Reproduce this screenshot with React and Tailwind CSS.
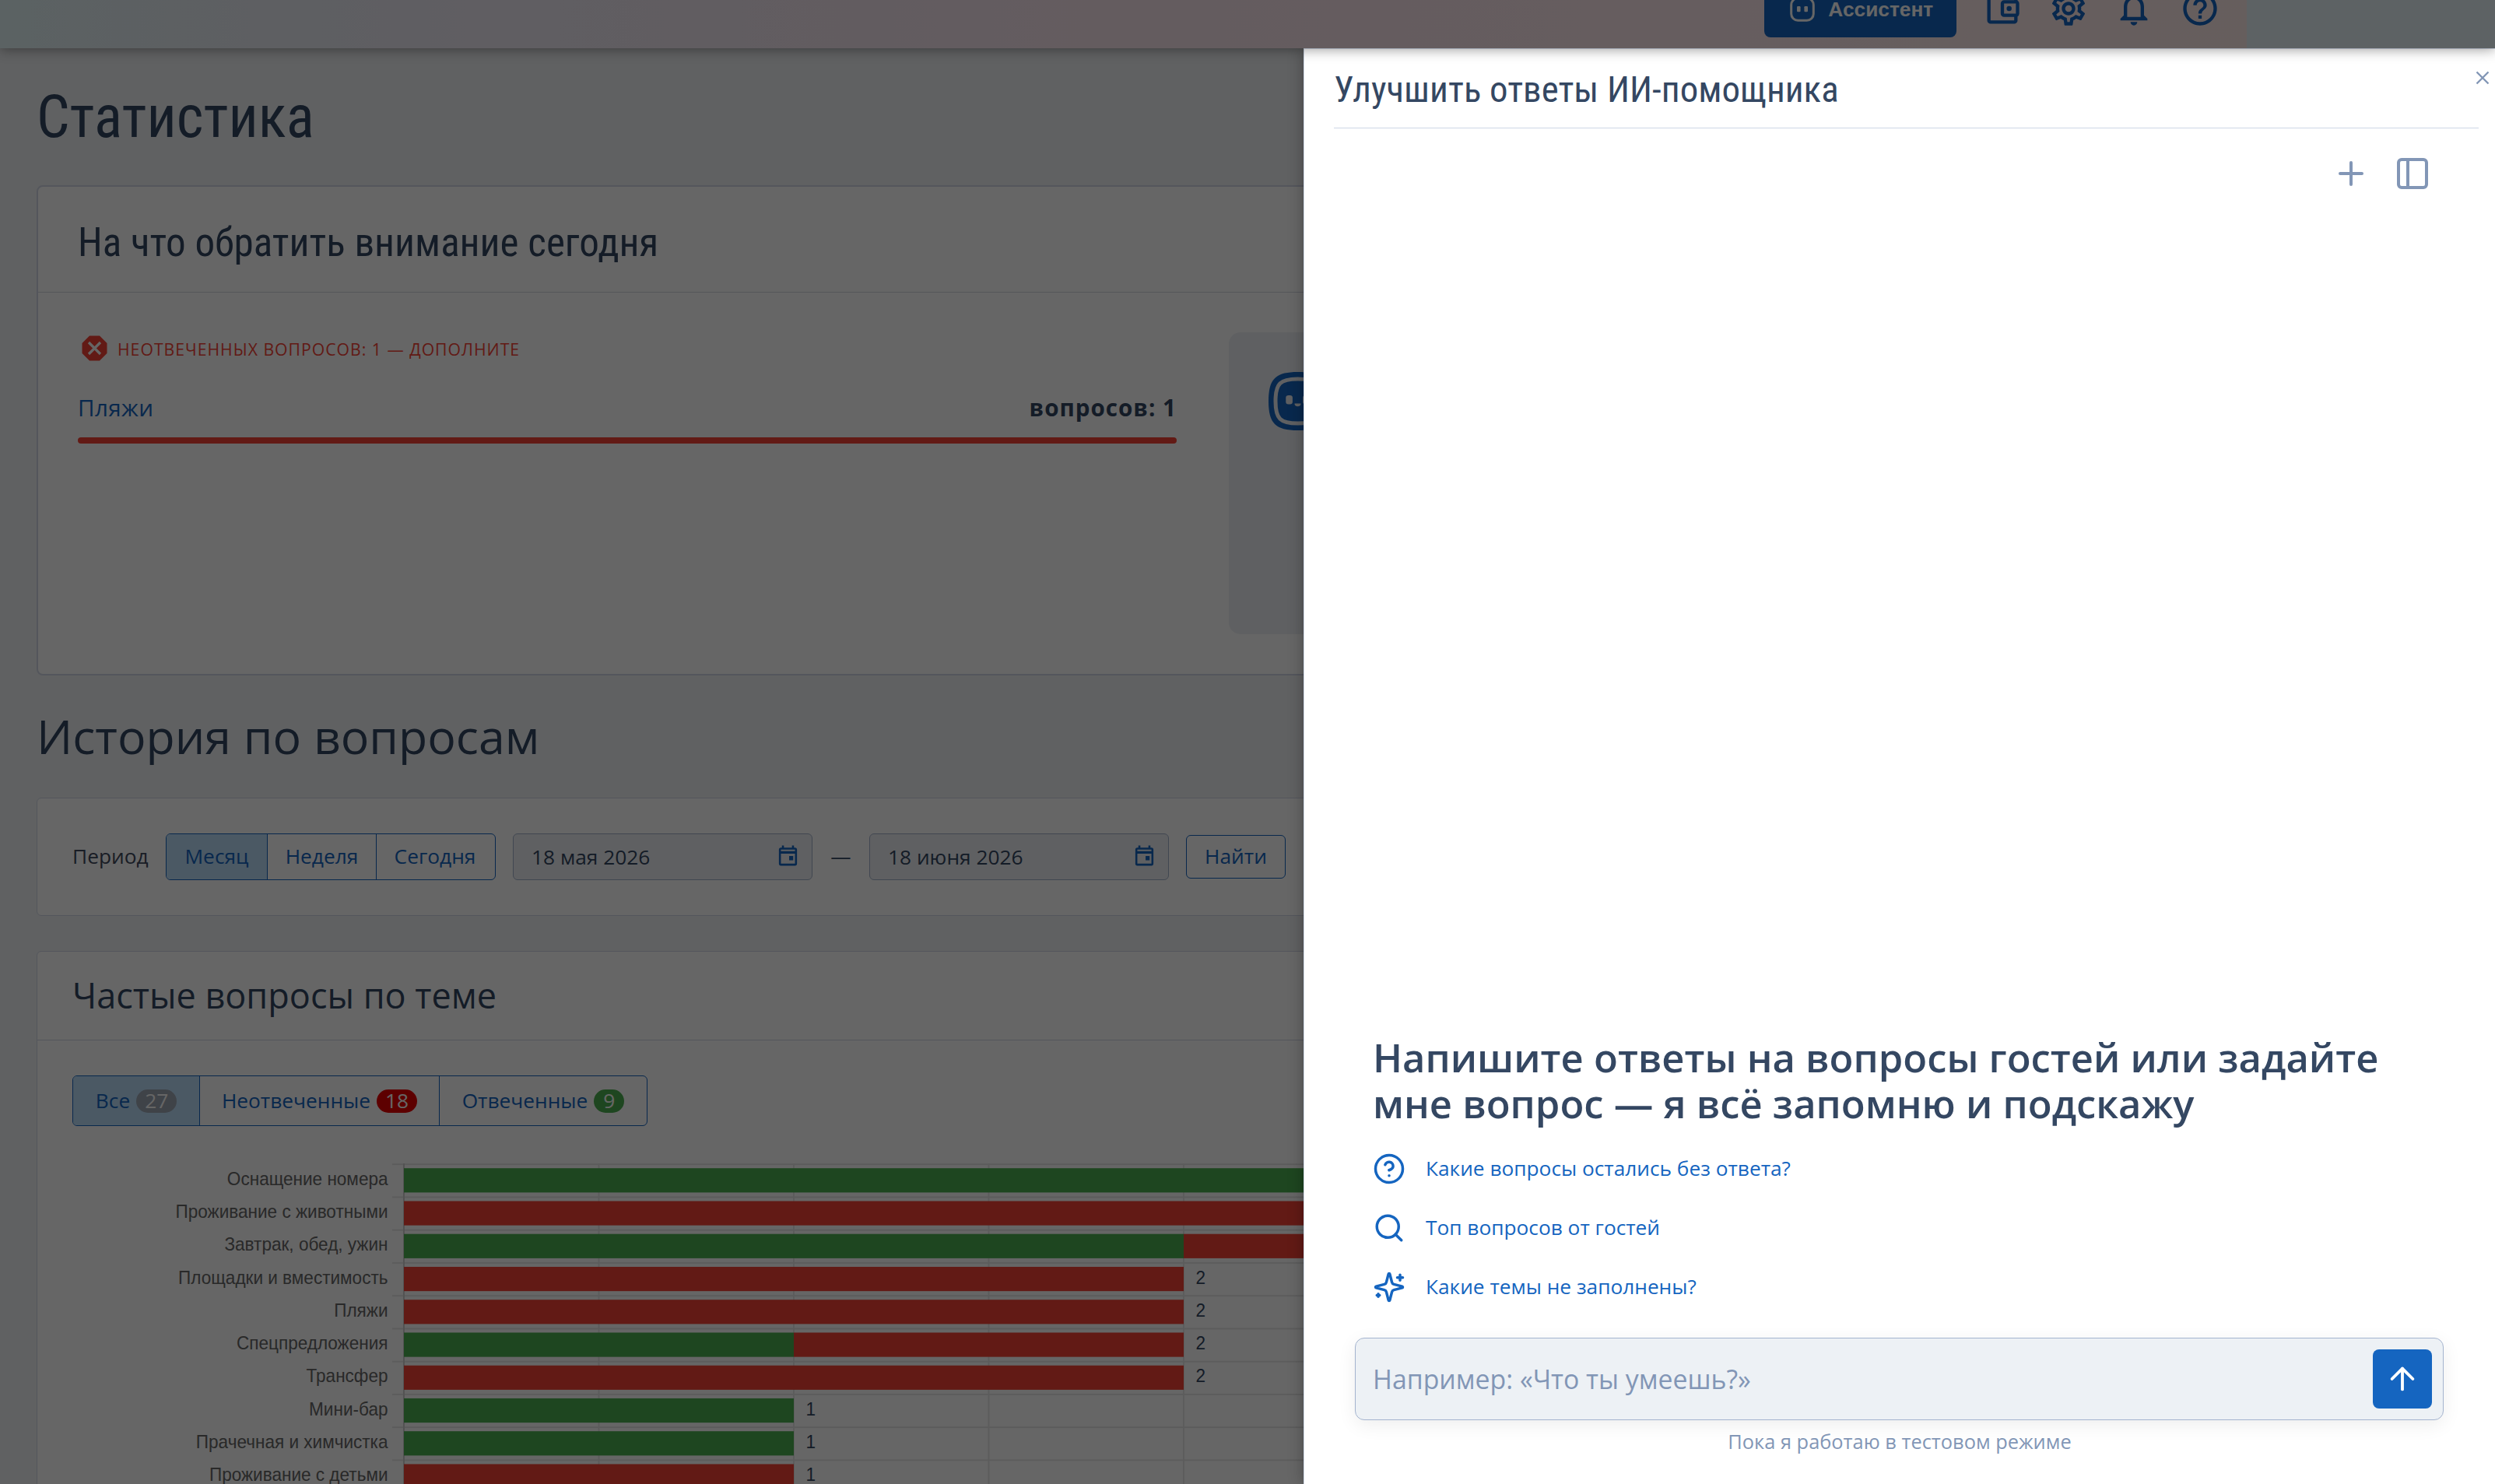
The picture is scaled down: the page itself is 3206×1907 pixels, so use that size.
import {
  MdOutlineAccountBalanceWallet,
  MdOutlineSettings,
  MdNotificationsNone,
  MdHelpOutline,
} from "react-icons/md";
import { Plus, PanelLeft, Search, ArrowUp, CircleHelp } from "lucide-react";

const chartRows = [
  { label: "Оснащение номера", ok: 4, bad: 0 },
  { label: "Проживание с животными", ok: 0, bad: 3 },
  { label: "Завтрак, обед, ужин", ok: 2, bad: 1 },
  { label: "Площадки и вместимость", ok: 0, bad: 2 },
  { label: "Пляжи", ok: 0, bad: 2 },
  { label: "Спецпредложения", ok: 1, bad: 1 },
  { label: "Трансфер", ok: 0, bad: 2 },
  { label: "Мини-бар", ok: 1, bad: 0 },
  { label: "Прачечная и химчистка", ok: 1, bad: 0 },
  { label: "Проживание с детьми", ok: 0, bad: 1 },
];

function RobotMark() {
  return (
    <svg className="h-8 w-8" viewBox="0 0 32 32" fill="none">
      <rect x="1.7" y="1.7" width="28.6" height="28.6" rx="8.5" stroke="currentColor" strokeWidth="3" />
      <rect x="9" y="12" width="4.6" height="7.2" rx="1.2" fill="currentColor" />
      <rect x="18.4" y="12" width="4.6" height="7.2" rx="1.2" fill="currentColor" />
    </svg>
  );
}

function SparklesIcon() {
  return (
    <svg className="h-[42px] w-[42px] shrink-0" viewBox="0 0 24 24" fill="none" stroke="currentColor" strokeWidth="2" strokeLinecap="round" strokeLinejoin="round">
      <path d="M9.937 15.5A2 2 0 0 0 8.5 14.063l-6.135-1.582a.5.5 0 0 1 0-.962L8.5 9.936A2 2 0 0 0 9.937 8.5l1.582-6.135a.5.5 0 0 1 .963 0L14.063 8.5A2 2 0 0 0 15.5 9.937l6.135 1.581a.5.5 0 0 1 0 .964L15.5 14.063a2 2 0 0 0-1.437 1.437l-1.582 6.135a.5.5 0 0 1-.963 0z" />
      <path d="M20 3v4M22 5h-4M4 17v2M5 18H3" />
    </svg>
  );
}

function AssistantLogo() {
  return (
    <svg className="h-[75px] w-[75px]" viewBox="0 0 75 75" fill="none">
      <path d="M37.5 0C66 0 75 9 75 37.5S66 75 37.5 75 0 66 0 37.5 9 0 37.5 0Z" fill="#1565c0" />
      <path d="M37.5 9C60 9 66 15 66 37.5S60 66 37.5 66 9 60 9 37.5 15 9 37.5 9Z" stroke="#edf1f5" strokeWidth="5" />
      <rect x="22.3" y="30" width="8.6" height="11.5" rx="3.2" fill="#edf1f5" />
      <rect x="44" y="30" width="8.6" height="11.5" rx="3.2" fill="#edf1f5" />
      <path d="M33.5 40.5h8a4 3.8 0 0 1-8 0Z" fill="#edf1f5" />
    </svg>
  );
}

function AlertOctagon() {
  return (
    <svg className="h-[33px] w-[33px]" viewBox="0 0 33 33">
      <path d="M10 .5h13L32.5 10v13L23 32.5H10L.5 23V10Z" fill="#f44336" />
      <path d="M9 9l15 15m0-15l-15 15" stroke="#fff" strokeWidth="3.2" />
    </svg>
  );
}

function CalendarIcon() {
  return (
    <svg className="mb-1 h-[31px] w-[31px]" viewBox="0 0 24 24" fill="#1565c0" fillRule="evenodd">
      <path d="M19 4h-1V2h-2v2H8V2H6v2H5a2 2 0 0 0-2 2v14a2 2 0 0 0 2 2h14a2 2 0 0 0 2-2V6a2 2 0 0 0-2-2zm0 16H5V10h14v10zm0-12.4H5V6h14v1.6zM13.2 12.3h4v4.4h-4z" />
    </svg>
  );
}

function DateField({ value }) {
  return (
    <div className="flex h-[60px] w-[385px] items-center justify-between rounded-md border border-[#a4b2cb] bg-[#edf1f5] pl-[23px] pr-[15px] text-[26.3px] text-[#344762]">
      <span className="pt-0.5">{value}</span>
      <CalendarIcon />
    </div>
  );
}

function BarChart() {
  const x0 = 426;
  const unit = 501;
  const pitch = 42.25;
  const squeeze = 0.94;
  return (
    <svg className="mt-[48px] block" width="3000" height="412" viewBox="0 0 3000 412" fontFamily="'Liberation Sans', Arial, sans-serif" fontSize="24">
      {chartRows.map((r, i) => (
        <rect key={r.label} x="411" y={i * pitch + 0.2} width="2589" height="1.9" fill="#e6e6e6" />
      ))}
      {[1, 2, 3, 4, 5, 6].map((n) => (
        <rect key={n} x={x0 + (n * unit) / 2 - 1} y="0" width="1.9" height="412" fill="#e6e6e6" />
      ))}
      <rect x={x0 - 1} y="0" width="2" height="412" fill="#cfcfcf" />
      {chartRows.map((r, i) => {
        const y = i * pitch + 6.2;
        const baseline = i * pitch + 27.8;
        const end = x0 + (r.ok + r.bad) * unit;
        return (
          <g key={r.label}>
            <text transform={`translate(405.5 ${baseline}) scale(${squeeze} 1)`} textAnchor="end" fill="#666">{r.label}</text>
            <rect x={x0} y={y} width={r.ok * unit} height="31.2" fill="#4caf50" />
            <rect x={x0 + r.ok * unit} y={y} width={r.bad * unit} height="31.2" fill="#f44336" />
            <text transform={`translate(${end + 15.5} ${baseline}) scale(${squeeze} 1)`} fill="#344762">{r.ok + r.bad}</text>
          </g>
        );
      })}
    </svg>
  );
}

function TopBar() {
  return (
    <header className="absolute inset-x-0 top-0 z-30 h-[62px] bg-[#e8f4fa] shadow-[0_2px_15px_rgba(0,0,0,0.38)]">
      <div className="flex h-full w-[2887px] justify-end bg-[linear-gradient(90deg,#e3f5f7_0px,#e8eff6_220px,#efebf5_600px,#f3e8f2_950px,#fae5ee_1400px,#ffe9ee_2200px,#ffebe9_2887px)] pr-[34px]">
        <div className="-mt-[47px] flex h-[95px] items-center gap-[32.7px] text-[#1565c0]">
          <div className="flex h-[95px] w-[247px] items-center gap-[17px] rounded-lg bg-[#1565c0] pl-[33px] pt-[23px] text-white">
            <RobotMark />
            <span className="font-['Liberation_Sans'] text-[26.3px] leading-8 font-bold">Ассистент</span>
          </div>
          <div className="flex items-center gap-[32.7px] pt-[21px]">
            <MdOutlineAccountBalanceWallet size={52} />
            <MdOutlineSettings size={52} />
            <MdNotificationsNone size={52} />
            <MdHelpOutline size={52} />
          </div>
        </div>
      </div>
      <div className="absolute inset-0 bg-black/60" />
    </header>
  );
}

function Page() {
  return (
    <main className="h-[1907px] overflow-hidden bg-[#eff2f6] px-[47px] pt-[102px] text-[#344762]">
      <h1 className="font-['Roboto_Condensed'] text-[75.2px] leading-[96px]">Статистика</h1>

      <section className="mt-10 h-[630px] rounded-lg border-2 border-[#d2d8e6] bg-white">
        <div className="h-[136px] border-b border-[#d2d8e0] pl-[51px] pt-[42px]">
          <h2 className="font-['Roboto_Condensed'] text-[51.1px] leading-[60px]">На что обратить внимание сегодня</h2>
        </div>
        <div className="flex items-start gap-[67px] pl-[51px] pr-12 pt-[51px]">
          <div className="w-[1412px] shrink-0">
            <div className="flex h-10 items-center gap-[13px] pl-[5px] pt-[1px] text-[21.2px] tracking-[1px] text-[#f44336]">
              <AlertOctagon />
              <span className="pt-[2px]">НЕОТВЕЧЕННЫХ ВОПРОСОВ: 1 — ДОПОЛНИТЕ</span>
            </div>
            <div className="mt-[36px] flex h-[42px] items-center justify-between text-[29.6px]">
              <span className="tracking-[0.4px] text-[#1565c0]">Пляжи</span>
              <span className="font-bold tracking-[1px]">вопросов: 1</span>
            </div>
            <div className="mt-[17px] h-2 rounded-full bg-[#f44336]" />
          </div>
          <div className="h-[388px] grow rounded-[15px] bg-[#edf1f5] pl-[51px] pt-[51px]">
            <AssistantLogo />
          </div>
        </div>
      </section>

      <h2 className="mt-[38px] text-[60.8px] leading-[80px]">История по вопросам</h2>

      <section className="mt-[39px] flex h-[152px] items-center rounded-md border border-[#d2d8e6] bg-white pl-[45px] text-[26.3px]">
        <span className="w-[120px] text-[#3f4a5c]">Период</span>
        <div className="flex h-[60px] overflow-hidden rounded-md border border-[#1565c0] text-[#1565c0]">
          <span className="flex w-[130px] items-center justify-center border-r border-[#1565c0] bg-[#bbdefb]">Месяц</span>
          <span className="flex w-[140px] items-center justify-center border-r border-[#1565c0]">Неделя</span>
          <span className="flex w-[152px] items-center justify-center pr-[2px]">Сегодня</span>
        </div>
        <div className="ml-[22px]"><DateField value="18 мая 2026" /></div>
        <span className="w-[73px] text-center">—</span>
        <DateField value="18 июня 2026" />
        <span className="ml-[22px] flex h-14 w-[128px] items-center justify-center rounded-md border border-[#1565c0] text-[#1565c0]">Найти</span>
      </section>

      <section className="mt-[45px] h-[900px] rounded-md border border-[#d2d8e6] bg-white">
        <div className="flex h-[114px] items-center border-b border-[#d2d8e6] pl-[45px]">
          <h3 className="-mt-[2px] text-[45px] leading-[60px]">Частые вопросы по теме</h3>
        </div>
        <div className="pl-[45px] pt-[45px]">
          <div className="flex h-[65px] w-max overflow-hidden rounded-md border border-[#1565c0] text-[26.3px] text-[#1565c0]">
            <span className="flex w-[163px] items-center justify-center gap-2 border-r border-[#1565c0] bg-[#bbdefb]">
              Все <b className="flex h-[30px] w-[52px] items-center justify-center rounded-full bg-[#9ea7b4] font-normal text-white">27</b>
            </span>
            <span className="flex w-[308px] items-center justify-center gap-2 border-r border-[#1565c0]">
              Неотвеченные <b className="flex h-[30px] w-[52px] items-center justify-center rounded-full bg-[#e80000] font-normal text-white">18</b>
            </span>
            <span className="flex w-[266px] items-center justify-center gap-2">
              Отвеченные <b className="flex h-[30px] w-[39px] items-center justify-center rounded-full bg-[#4caf50] font-normal text-white">9</b>
            </span>
          </div>
          <BarChart />
        </div>
      </section>
    </main>
  );
}

function Suggestion({ icon, children }) {
  return (
    <div className="flex h-[76px] items-center gap-[26px] text-[26.25px] text-[#1565c0]">
      {icon}
      <span>{children}</span>
    </div>
  );
}

function Drawer() {
  return (
    <aside className="absolute left-[1675px] top-[62px] z-20 flex h-[1845px] w-[1531px] flex-col border-l border-t border-[#d0d8e6] bg-white text-[#344762] shadow-[0_0_18px_rgba(0,0,0,0.3)]">
      <div className="flex h-[102px] items-start pl-[38px] pr-[7px]">
        <div className="flex h-[102px] grow items-center border-b border-[#cdd6e6] pt-[3px]">
          <h2 className="font-['Roboto_Condensed'] text-[46.9px] leading-[60px]">Улучшить ответы ИИ-помощника</h2>
        </div>
        <svg className="-ml-[4px] mt-[28px] h-[18px] w-[18px]" viewBox="0 0 18 18">
          <path d="M1.5 1.5l15 15m0-15l-15 15" stroke="#8296b6" strokeWidth="2.4" />
        </svg>
      </div>
      <div className="flex justify-end gap-[31px] pr-[82px] pt-[34px] text-[#8296b6]">
        <Plus size={48} />
        <PanelLeft size={48} />
      </div>
      <div className="mt-auto pr-[80px] pl-[88px]">
        <h3 className="text-[50.7px] leading-[59px] font-semibold">
          Напишите ответы на вопросы гостей или задайте
          <br />
          мне вопрос — я всё запомню и подскажу
        </h3>
        <div className="mt-[17px]">
          <Suggestion icon={<CircleHelp size={42} />}>Какие вопросы остались без ответа?</Suggestion>
          <Suggestion icon={<Search size={42} />}>Топ вопросов от гостей</Suggestion>
          <Suggestion icon={<SparklesIcon />}>Какие темы не заполнены?</Suggestion>
        </div>
      </div>
      <div className="ml-[65px] mr-[66px] mt-[27px] flex h-[106px] items-center justify-between rounded-xl border border-[#a4b4cf] bg-[#edf1f5] pl-[22px] pr-[14px] shadow-[0_6px_24px_rgba(0,0,0,0.07)]">
        <span className="text-[33.8px] text-[#8296b6]">Например: «Что ты умеешь?»</span>
        <span className="flex h-[76px] w-[76px] items-center justify-center rounded-lg bg-[#1565c0] text-white">
          <ArrowUp size={46} />
        </span>
      </div>
      <p className="mb-[36px] mt-[8px] text-center text-[25.4px] leading-[38px] text-[#8296b6]">Пока я работаю в тестовом режиме</p>
    </aside>
  );
}

export default function App() {
  return (
    <div className="relative h-[1907px] w-[3206px] overflow-hidden font-['Open_Sans',sans-serif]">
      <Page />
      <div className="absolute inset-0 z-10 bg-black/60" />
      <Drawer />
      <TopBar />
    </div>
  );
}
